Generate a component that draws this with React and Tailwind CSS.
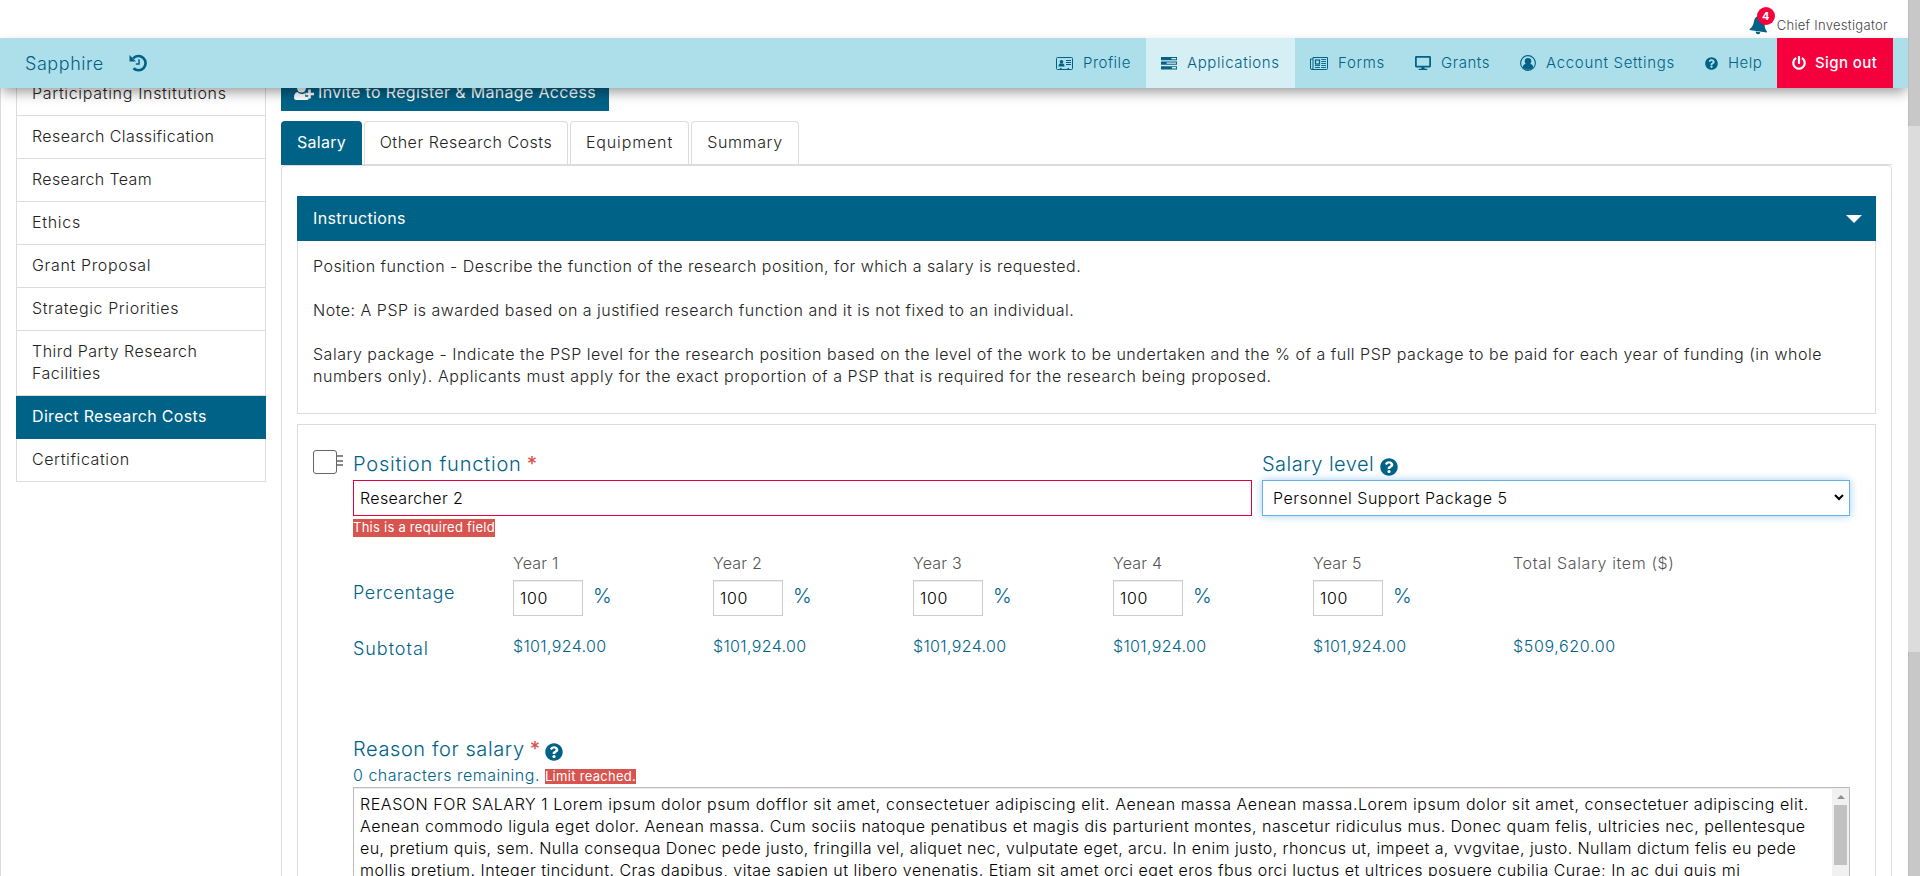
import { FaDesktop, FaPowerOff, FaQuestionCircle } from "react-icons/fa";

function BellIcon({ className }) {
  return (
    <svg viewBox="0 0 18 20" className={className} fill="currentColor">
      <path d="M9 1c3.200 0 5.500 2.400 5.500 5.700 0 4.300 1 6.800 3.300 8.600v1H.2v-1c2.300-1.800 3.300-4.300 3.300-8.600C3.500 3.400 5.800 1 9 1zM6.600 17h4.800a2.400 2.400 0 0 1-4.800 0z" />
    </svg>
  );
}

function HistoryIcon({ className }) {
  return (
    <svg viewBox="0 0 18 18" className={className}>
      <path
        d="M4.200 4.400A7.100 7.100 0 1 1 4.500 14.200"
        fill="none"
        stroke="currentColor"
        strokeWidth="2.600"
      />
      <path d="M.5 1v6.500H7z" fill="currentColor" />
      <path d="M10 5.200v4.900H6.800" fill="none" stroke="currentColor" strokeWidth="1.500" />
    </svg>
  );
}

function UserPlusIcon({ className }) {
  return (
    <svg viewBox="0 0 20 18" className={className} fill="currentColor">
      <circle cx="7.500" cy="5" r="4.500" />
      <path d="M3.600 9C1.300 9.400 0 11.600 0 14.800 0 16.300 1 17 2.300 17h10.400c.9 0 1.500-.3 1.900-.8v-2.400h-3.400v-3.900c-.7.400-2 1-3.700 1-1.900 0-3.100-.9-3.900-1.900z" />
      <path d="M14.200 6.500h2.600v3.200H20v2.600h-3.200v3.200h-2.600v-3.200H11.500V9.700h2.700z" />
    </svg>
  );
}

function TasksIcon({ className }) {
  return (
    <svg viewBox="0 0 16 14" className={className} fill="currentColor">
      <path
        fillRule="evenodd"
        d="M0 1h16v3.2H0zM10.4 1.9v1.3h4.7V1.9zM0 5.6h16v3.2H0zM5.6 6.5v1.3h9.5V6.5zM0 10.2h16v3.2H0zM10.9 11.1v1.3h4.2v-1.3z"
      />
    </svg>
  );
}

function CardIcon({ className }) {
  return (
    <svg viewBox="0 0 17 13" className={className}>
      <rect x="0.5" y="0.5" width="16" height="12" rx="1" fill="none" stroke="currentColor" />
      <circle cx="5.5" cy="4.8" r="1.8" fill="currentColor" />
      <path d="M2.500 9.500c0-2 .8-3 1.700-3h2.600c.9 0 1.700 1 1.700 3z" fill="currentColor" />
      <path d="M10 3.500h5M10 5.500h5M10 7.500h5M4 11.500h1.500M11.500 11.500H13" stroke="currentColor" fill="none" />
    </svg>
  );
}

function NewspaperIcon({ className }) {
  return (
    <svg viewBox="0 0 18 13" className={className} fill="none" stroke="currentColor">
      <path d="M3 .5h14.500v11a1 1 0 0 1-1 1H2a1.500 1.500 0 0 1-1.500-1.500V2H3zM3 2v9a1.300 1.300 0 0 1-1.300 1.400" />
      <rect x="5.500" y="3" width="4" height="4" strokeWidth="1.200" />
      <path d="M11.200 2.500h4.800M11.200 4.500h4.800M11.200 6.500h4.800M11.200 8.500h4.800M5 8.500h5M5 10.500h5M11.200 10.500h4.800" strokeWidth="0.900" />
    </svg>
  );
}

function AccountIcon({ className }) {
  return (
    <svg viewBox="0 0 16 16" className={className}>
      <circle cx="8" cy="8" r="7.4" fill="none" stroke="currentColor" strokeWidth="1.1" />
      <path
        fill="currentColor"
        d="M8 2.900a3.300 3.300 0 0 1 3.300 3.400c0 1.100-.4 2-1 2.600 1.700.3 2.800 1.300 3 3.300A6.800 6.800 0 0 1 8 14.800a6.800 6.800 0 0 1-5.300-2.600c.2-2 1.300-3 3-3.300-.6-.6-1-1.500-1-2.600A3.300 3.300 0 0 1 8 2.900z"
      />
    </svg>
  );
}

const navItems = [
  { label: "Profile", Icon: CardIcon, icon: "h-[13px] w-[17px]", box: "w-[106px] pl-4", text: "tracking-[0.5px]" },
  { label: "Applications", Icon: TasksIcon, icon: "h-[14px] w-[16px]", box: "w-[149px] bg-[#d6eff4] pl-[15px]", text: "tracking-[0.6px]" },
  { label: "Forms", Icon: NewspaperIcon, icon: "h-[13px] w-[18px]", box: "w-[105px] pl-[15px]", text: "tracking-[0.7px]" },
  { label: "Grants", Icon: FaDesktop, icon: "h-4 w-4", box: "w-[105px] pl-[15px]", text: "tracking-[0.55px]" },
  { label: "Account Settings", Icon: AccountIcon, icon: "h-4 w-4", box: "w-[185px] pl-[15px]", text: "tracking-[0.68px]" },
  { label: "Help", Icon: FaQuestionCircle, icon: "h-[13px] w-[13px]", box: "w-[87px] pl-[15px]", text: "tracking-[0.5px]" },
];

const sections = [
  { label: "Participating Institutions", text: "tracking-[0.68px]" },
  { label: "Research Classification", text: "tracking-[0.41px]" },
  { label: "Research Team", text: "tracking-[0.38px]" },
  { label: "Ethics", text: "tracking-[0.7px]" },
  { label: "Grant Proposal", text: "tracking-[0.65px]" },
  { label: "Strategic Priorities", text: "tracking-[0.6px]" },
  { label: "Third Party Research Facilities", text: "tracking-[0.48px]" },
  { label: "Direct Research Costs", text: "tracking-[0.33px]", active: true },
  { label: "Certification", text: "tracking-[0.6px]" },
];

const reasonLines = [
  { text: "REASON FOR SALARY 1 Lorem ipsum dolor psum dofflor sit amet, consectetuer adipiscing elit. Aenean massa Aenean massa.Lorem ipsum dolor sit amet, consectetuer adipiscing elit.", track: "tracking-[0.56px]" },
  { text: "Aenean commodo ligula eget dolor. Aenean massa. Cum sociis natoque penatibus et magis dis parturient montes, nascetur ridiculus mus. Donec quam felis, ultricies nec, pellentesque", track: "tracking-[0.48px]" },
  { text: "eu, pretium quis, sem. Nulla consequa Donec pede justo, fringilla vel, aliquet nec, vulputate eget, arcu. In enim justo, rhoncus ut, impeet a, vvgvitae, justo. Nullam dictum felis eu pede", track: "tracking-[0.44px]" },
  { text: "mollis pretium. Integer tincidunt. Cras dapibus, vitae sapien ut libero venenatis. Etiam sit amet orci eget eros fbus orci luctus et ultrices posuere cubilia Curae; In ac dui quis mi", track: "tracking-[0.49px]" },
];

const years = ["Year 1", "Year 2", "Year 3", "Year 4", "Year 5"];

function Header() {
  return (
    <header className="relative z-10">
      <div className="flex h-[38px] items-start justify-end bg-white pr-5">
        <div className="relative mt-[15px] h-5 w-[18px] text-[#006286]">
          <BellIcon className="h-[20px] w-[18px] rotate-[8deg]" />
          <span className="absolute -top-2 left-[7px] flex h-[18px] w-[18px] items-center justify-center rounded-full bg-[#f5003d] text-[11px] leading-none font-bold text-white">
            4
          </span>
        </div>
        <span className="mt-[15px] ml-[9px] text-[13px] leading-5 tracking-[0.3px] whitespace-nowrap text-[#444]">
          Chief Investigator
        </span>
      </div>
      <nav className="flex h-[50px] items-stretch bg-[#addfea] text-[#006286] shadow-[0_6px_12px_-2px_rgba(0,0,0,0.4)]">
        <div className="flex items-center pl-[25px]">
          <span className="text-[18px] tracking-[0.55px]">Sapphire</span>
          <HistoryIcon className="ml-[25px] h-[18px] w-[18px]" />
        </div>
        <div className="ml-auto flex items-stretch pr-[15px] text-[15px]">
          {navItems.map(({ label, Icon, icon, box, text }) => (
            <a key={label} className={`flex shrink-0 items-center gap-[10px] whitespace-nowrap ${box}`}>
              <Icon className={`shrink-0 ${icon}`} />
              <span className={text}>{label}</span>
            </a>
          ))}
          <a className="flex w-[116px] items-center gap-[9px] bg-[#f5003d] pl-[15px] font-medium whitespace-nowrap text-white">
            <FaPowerOff className="h-[14px] w-[14px]" />
            <span className="tracking-[0.4px]">Sign out</span>
          </a>
        </div>
      </nav>
    </header>
  );
}

function Sidebar() {
  return (
    <ul className="-mt-[15px] w-[250px] shrink-0 self-start text-[16px] leading-[22px] text-[#222]">
      {sections.map(({ label, text, active }) => (
        <li
          key={label}
          className={
            active
              ? "border border-t-0 border-[#006286] bg-[#006286] px-[15px] pt-[9px] pb-[11px] font-normal text-white"
              : "border border-t-0 border-[#dcdcdc] px-[15px] pt-[9px] pb-[11px]"
          }
        >
          <span className={text}>{label}</span>
        </li>
      ))}
    </ul>
  );
}

function Tabs() {
  const tab =
    "flex h-[43px] items-center justify-center rounded-t-[4px] border border-b-0 border-[#dcdcdc] pb-[2px] whitespace-nowrap";
  return (
    <div className="mt-[10px] flex h-[44px] shrink-0 items-start gap-[2px] border-b border-[#dcdcdc] text-[16px] text-[#222]">
      <div className="flex h-[44px] w-[81px] items-center justify-center rounded-t-[4px] bg-[#006286] pb-[2px] font-normal text-white">
        <span className="tracking-[0.27px]">Salary</span>
      </div>
      <div className={`${tab} w-[204px] tracking-[0.52px]`}>Other Research Costs</div>
      <div className={`${tab} w-[119px] tracking-[0.85px]`}>Equipment</div>
      <div className={`${tab} w-[108px] tracking-[0.6px]`}>Summary</div>
    </div>
  );
}

function Instructions() {
  return (
    <section>
      <div className="flex h-[45px] items-center justify-between bg-[#006286] pr-[14px] pl-4 text-[16px] font-normal text-white">
        <span className="-mt-px tracking-[0.34px]">Instructions</span>
        <svg viewBox="0 0 16 8" className="mt-px h-2 w-4" fill="currentColor">
          <path d="M0 0h16L8 8z" />
        </svg>
      </div>
      <div className="h-[173px] border border-t-0 border-[#dcdcdc] px-[15px] pt-[14px] text-[16px] leading-[22px] whitespace-nowrap text-[#222]">
        <p className="mb-[22px] tracking-[0.47px]">
          Position function - Describe the function of the research position, for which a salary is requested.
        </p>
        <p className="mb-[22px] tracking-[0.5px]">
          Note: A PSP is awarded based on a justified research function and it is not fixed to an individual.
        </p>
        <p className="tracking-[0.5px]">
          Salary package - Indicate the PSP level for the research position based on the level of the work to be
          undertaken and the % of a full PSP package to be paid for each year of funding (in whole
        </p>
        <p className="tracking-[0.57px]">
          numbers only). Applicants must apply for the exact proportion of a PSP that is required for the research
          being proposed.
        </p>
      </div>
    </section>
  );
}

function SalaryItem() {
  return (
    <section className="mt-[10px] flex h-[600px] border border-[#dcdcdc] pt-[25px] pl-[15px] text-[#006286]">
      <div className="flex w-10 shrink-0">
        <span className="h-6 w-6 rounded-[3px] border border-[#666] bg-white" />
        <span className="mt-[5px] flex h-[11px] w-[6px] flex-col justify-between">
          <span className="h-[2px] bg-[#888]" />
          <span className="h-[2px] bg-[#888]" />
          <span className="h-[2px] bg-[#888]" />
        </span>
      </div>
      <div className="w-[1497px] shrink-0">
        <div className="flex gap-[10px]">
          <div className="w-[899px]">
            <div className="flex h-[30px] items-center gap-[5px] pb-[2px] text-[20px]">
              <span className="tracking-[0.8px]">Position function</span>
              <span className="font-medium text-[#d9534f]">*</span>
            </div>
            <div className="flex h-9 items-center border border-[#e4003f] px-[6px] pb-px text-[16px] tracking-[0.35px] text-black">
              Researcher 2
            </div>
            <div className="mt-[3px] flex h-[18px] w-fit items-center bg-[#d9534f] text-[13px] font-normal whitespace-nowrap text-white">
              <span className="tracking-[0.25px]">This is a required field</span>
            </div>
          </div>
          <div className="w-[588px]">
            <div className="flex h-[30px] items-center gap-[6px] pb-[2px] text-[20px]">
              <span className="tracking-[0.48px]">Salary level</span>
              <FaQuestionCircle className="mt-[6px] h-[18px] w-[18px]" />
            </div>
            <div className="flex h-9 items-center justify-between border border-[#66afe9] pr-[5px] pb-px pl-[10px] text-[16px] text-black shadow-[0_0_8px_rgba(102,175,233,0.6)]">
              <span className="tracking-[0.52px]">Personnel Support Package 5</span>
              <svg viewBox="0 0 10 7" className="h-[7px] w-[10px]" fill="none" stroke="currentColor" strokeWidth="2">
                <path d="M1 1l4 4 4-4" />
              </svg>
            </div>
          </div>
        </div>
        <div className="mt-[10px] grid grid-cols-[160px_repeat(5,200px)_1fr]">
          <div className="pt-[33px] text-[18px] leading-[26px]">
            <div className="tracking-[0.65px]">Percentage</div>
            <div className="mt-[30px] tracking-[0.95px]">Subtotal</div>
          </div>
          {years.map((year) => (
            <div key={year} className="pt-[5px]">
              <div className="text-[16px] leading-[22px] tracking-[0.2px] text-[#555]">{year}</div>
              <div className="mt-[6px] flex">
                <div className="flex h-9 w-[70px] items-center border border-[#ccc] pl-[6px] text-[16px] tracking-[0.6px] text-black shadow-[inset_0_1px_1px_rgba(0,0,0,0.075)]">
                  100
                </div>
                <span className="ml-[10px] text-[20px] leading-[32px] tracking-tight">%</span>
              </div>
              <div className="mt-[19px] text-[16px] leading-[22px] tracking-[0.35px]">$101,924.00</div>
            </div>
          ))}
          <div className="flex flex-col gap-[61px] pt-[5px] text-[16px] leading-[22px] whitespace-nowrap">
            <span className="tracking-[0.62px] text-[#555]">Total Salary item ($)</span>
            <span className="tracking-[0.65px]">$509,620.00</span>
          </div>
        </div>
        <div className="mt-[72px] flex h-[30px] items-center pb-px text-[20px]">
          <span className="tracking-[0.6px]">Reason for salary</span>
          <span className="ml-[5px] font-medium text-[#d9534f]">*</span>
          <FaQuestionCircle className="mt-[7px] ml-[5px] h-[18px] w-[18px]" />
        </div>
        <div className="flex h-[23px] items-center text-[16px] whitespace-nowrap">
          <span className="-mt-px tracking-[0.5px]">0 characters remaining.</span>
          <span className="mt-[2px] ml-[5px] flex h-[15px] items-center bg-[#d9534f] text-[13px] font-normal tracking-[0.3px] text-white">
            Limit reached.
          </span>
        </div>
        <div className="flex h-[160px] justify-between border border-[#bbb] text-[16px] leading-[22px] text-black shadow-[inset_0_1px_1px_rgba(0,0,0,0.075)]">
          <div className="pt-[5px] pl-[6px] whitespace-nowrap">
            {reasonLines.map(({ text, track }) => (
              <div key={text} className={track}>
                {text}
              </div>
            ))}
          </div>
          <div className="mt-px flex w-[17px] shrink-0 flex-col items-center bg-[#f1f1f1]">
            <svg viewBox="0 0 8 4" className="mt-[6px] h-1 w-2" fill="#8f8f8f">
              <path d="M0 4h8L4 0z" />
            </svg>
            <div className="mt-[6px] h-[60px] w-[13px] bg-[#c1c1c1]" />
          </div>
        </div>
      </div>
    </section>
  );
}

export default function App() {
  return (
    <div className="flex h-[876px] w-[1920px] overflow-hidden bg-white font-['Inter','Liberation_Sans',sans-serif] font-light">
      <div className="flex w-[1908px] shrink-0 flex-col">
        <Header />
        <main className="flex h-[788px] gap-[15px] overflow-hidden border-l border-[#dcdcdc] pr-[15px] pl-[15px]">
          <Sidebar />
          <div className="flex w-[1611px] shrink-0 flex-col">
            <div className="-mt-[13px] flex h-9 w-[328px] shrink-0 items-center bg-[#006286] pb-[2px] pl-[13px] text-[16px] font-normal whitespace-nowrap text-white">
              <UserPlusIcon className="h-[18px] w-5" />
              <span className="ml-1 tracking-[0.33px]">Invite to Register &amp; Manage Access</span>
            </div>
            <Tabs />
            <div className="h-[900px] shrink-0 rounded-t-[4px] border border-[#dcdcdc] px-[15px] pt-[30px]">
              <Instructions />
              <SalaryItem />
            </div>
          </div>
        </main>
      </div>
      <div className="z-20 flex w-3 shrink-0 flex-col justify-between bg-[#dcdcdc]">
        <div className="h-[126px] border-l border-[#bbb] bg-[#c8c8c8]" />
        <div className="h-[224px] border-l border-[#bbb] bg-[#c8c8c8]" />
      </div>
    </div>
  );
}
